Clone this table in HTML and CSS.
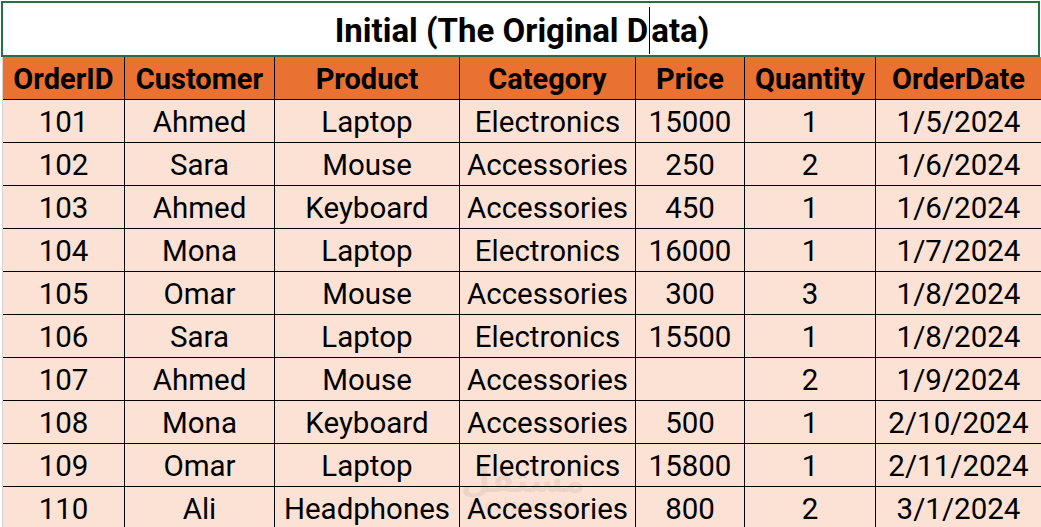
FILE: index.html
```html
<!DOCTYPE html>
<html lang="en">
<head>
<meta charset="utf-8">
<title>Initial (The Original Data)</title>
<link rel="stylesheet" href="styles.css">
</head>
<body>
<div class="sheet">
  <div class="title">Initial (The Original D<span class="caret"></span>ata)</div>
  <div class="grid-wrap">
    <div class="grid">
      <div class="cell head">OrderID</div><div class="cell head">Customer</div><div class="cell head">Product</div><div class="cell head">Category</div><div class="cell head">Price</div><div class="cell head">Quantity</div><div class="cell head">OrderDate</div>

      <div class="cell">101</div><div class="cell">Ahmed</div><div class="cell">Laptop</div><div class="cell">Electronics</div><div class="cell">15000</div><div class="cell">1</div><div class="cell">1/5/2024</div>
      <div class="cell">102</div><div class="cell">Sara</div><div class="cell">Mouse</div><div class="cell">Accessories</div><div class="cell">250</div><div class="cell">2</div><div class="cell">1/6/2024</div>
      <div class="cell">103</div><div class="cell">Ahmed</div><div class="cell">Keyboard</div><div class="cell">Accessories</div><div class="cell">450</div><div class="cell">1</div><div class="cell">1/6/2024</div>
      <div class="cell">104</div><div class="cell">Mona</div><div class="cell">Laptop</div><div class="cell">Electronics</div><div class="cell">16000</div><div class="cell">1</div><div class="cell">1/7/2024</div>
      <div class="cell">105</div><div class="cell">Omar</div><div class="cell">Mouse</div><div class="cell">Accessories</div><div class="cell">300</div><div class="cell">3</div><div class="cell">1/8/2024</div>
      <div class="cell">106</div><div class="cell">Sara</div><div class="cell">Laptop</div><div class="cell">Electronics</div><div class="cell">15500</div><div class="cell">1</div><div class="cell">1/8/2024</div>
      <div class="cell">107</div><div class="cell">Ahmed</div><div class="cell">Mouse</div><div class="cell">Accessories</div><div class="cell"></div><div class="cell">2</div><div class="cell">1/9/2024</div>
      <div class="cell">108</div><div class="cell">Mona</div><div class="cell">Keyboard</div><div class="cell">Accessories</div><div class="cell">500</div><div class="cell">1</div><div class="cell">2/10/2024</div>
      <div class="cell">109</div><div class="cell">Omar</div><div class="cell">Laptop</div><div class="cell">Electronics</div><div class="cell">15800</div><div class="cell">1</div><div class="cell">2/11/2024</div>
      <div class="cell">110</div><div class="cell">Ali</div><div class="cell">Headphones</div><div class="cell">Accessories</div><div class="cell">800</div><div class="cell">2</div><div class="cell">3/1/2024</div>
    </div>
    <div class="watermark" aria-hidden="true">
      <span class="wm-ar">مستقل</span>
      <span class="wm-en">mostaql.com</span>
    </div>
  </div>
</div>
</body>
</html>
```

FILE: styles.css
```css
html, body {
  margin: 0;
  padding: 0;
  background: #ffffff;
  overflow: hidden;
}

.sheet {
  width: 1041px;
  height: 527px;
  overflow: hidden;
  font-family: Roboto, "Liberation Sans", sans-serif;
  color: #000;
}

.title {
  box-sizing: border-box;
  margin: 1px 0 0 1px;
  width: 1039px;
  height: 56px;
  border: 2px solid #217346;
  display: flex;
  align-items: center;
  justify-content: center;
  font-size: 33px;
  font-weight: 700;
  padding-top: 2px;
  padding-left: 3px;
}

.caret {
  display: inline-block;
  width: 0;
  height: 47px;
  border-left: 1px solid #000;
  margin: 0 1px;
}

.grid-wrap {
  position: relative;
  margin-left: 2px;
  border-left: 1px solid #d4d4d4;
}

.grid {
  display: grid;
  grid-template-columns: 121px 149px 184px 175px 108px 130px 165px;
  grid-auto-rows: 42px;
  gap: 1px;
  background: #000;
}

.cell {
  background: #fbe2d5;
  display: flex;
  align-items: center;
  justify-content: center;
  font-size: 29.5px;
  padding-top: 2px;
  box-sizing: border-box;
  white-space: nowrap;
}

.cell.head {
  background: #e97132;
  font-weight: 700;
  font-size: 29px;
  padding-top: 1px;
}

.watermark {
  position: absolute;
  left: 440px;
  top: 405px;
  width: 160px;
  display: flex;
  flex-direction: column;
  align-items: center;
  color: rgba(110, 80, 70, 0.09);
  pointer-events: none;
}

.wm-ar {
  font-family: "DejaVu Sans", sans-serif;
  font-weight: 700;
  font-size: 34px;
  line-height: 36px;
}

.wm-en {
  font-family: "DejaVu Sans", sans-serif;
  font-size: 15px;
  line-height: 16px;
  letter-spacing: 1px;
}
```
